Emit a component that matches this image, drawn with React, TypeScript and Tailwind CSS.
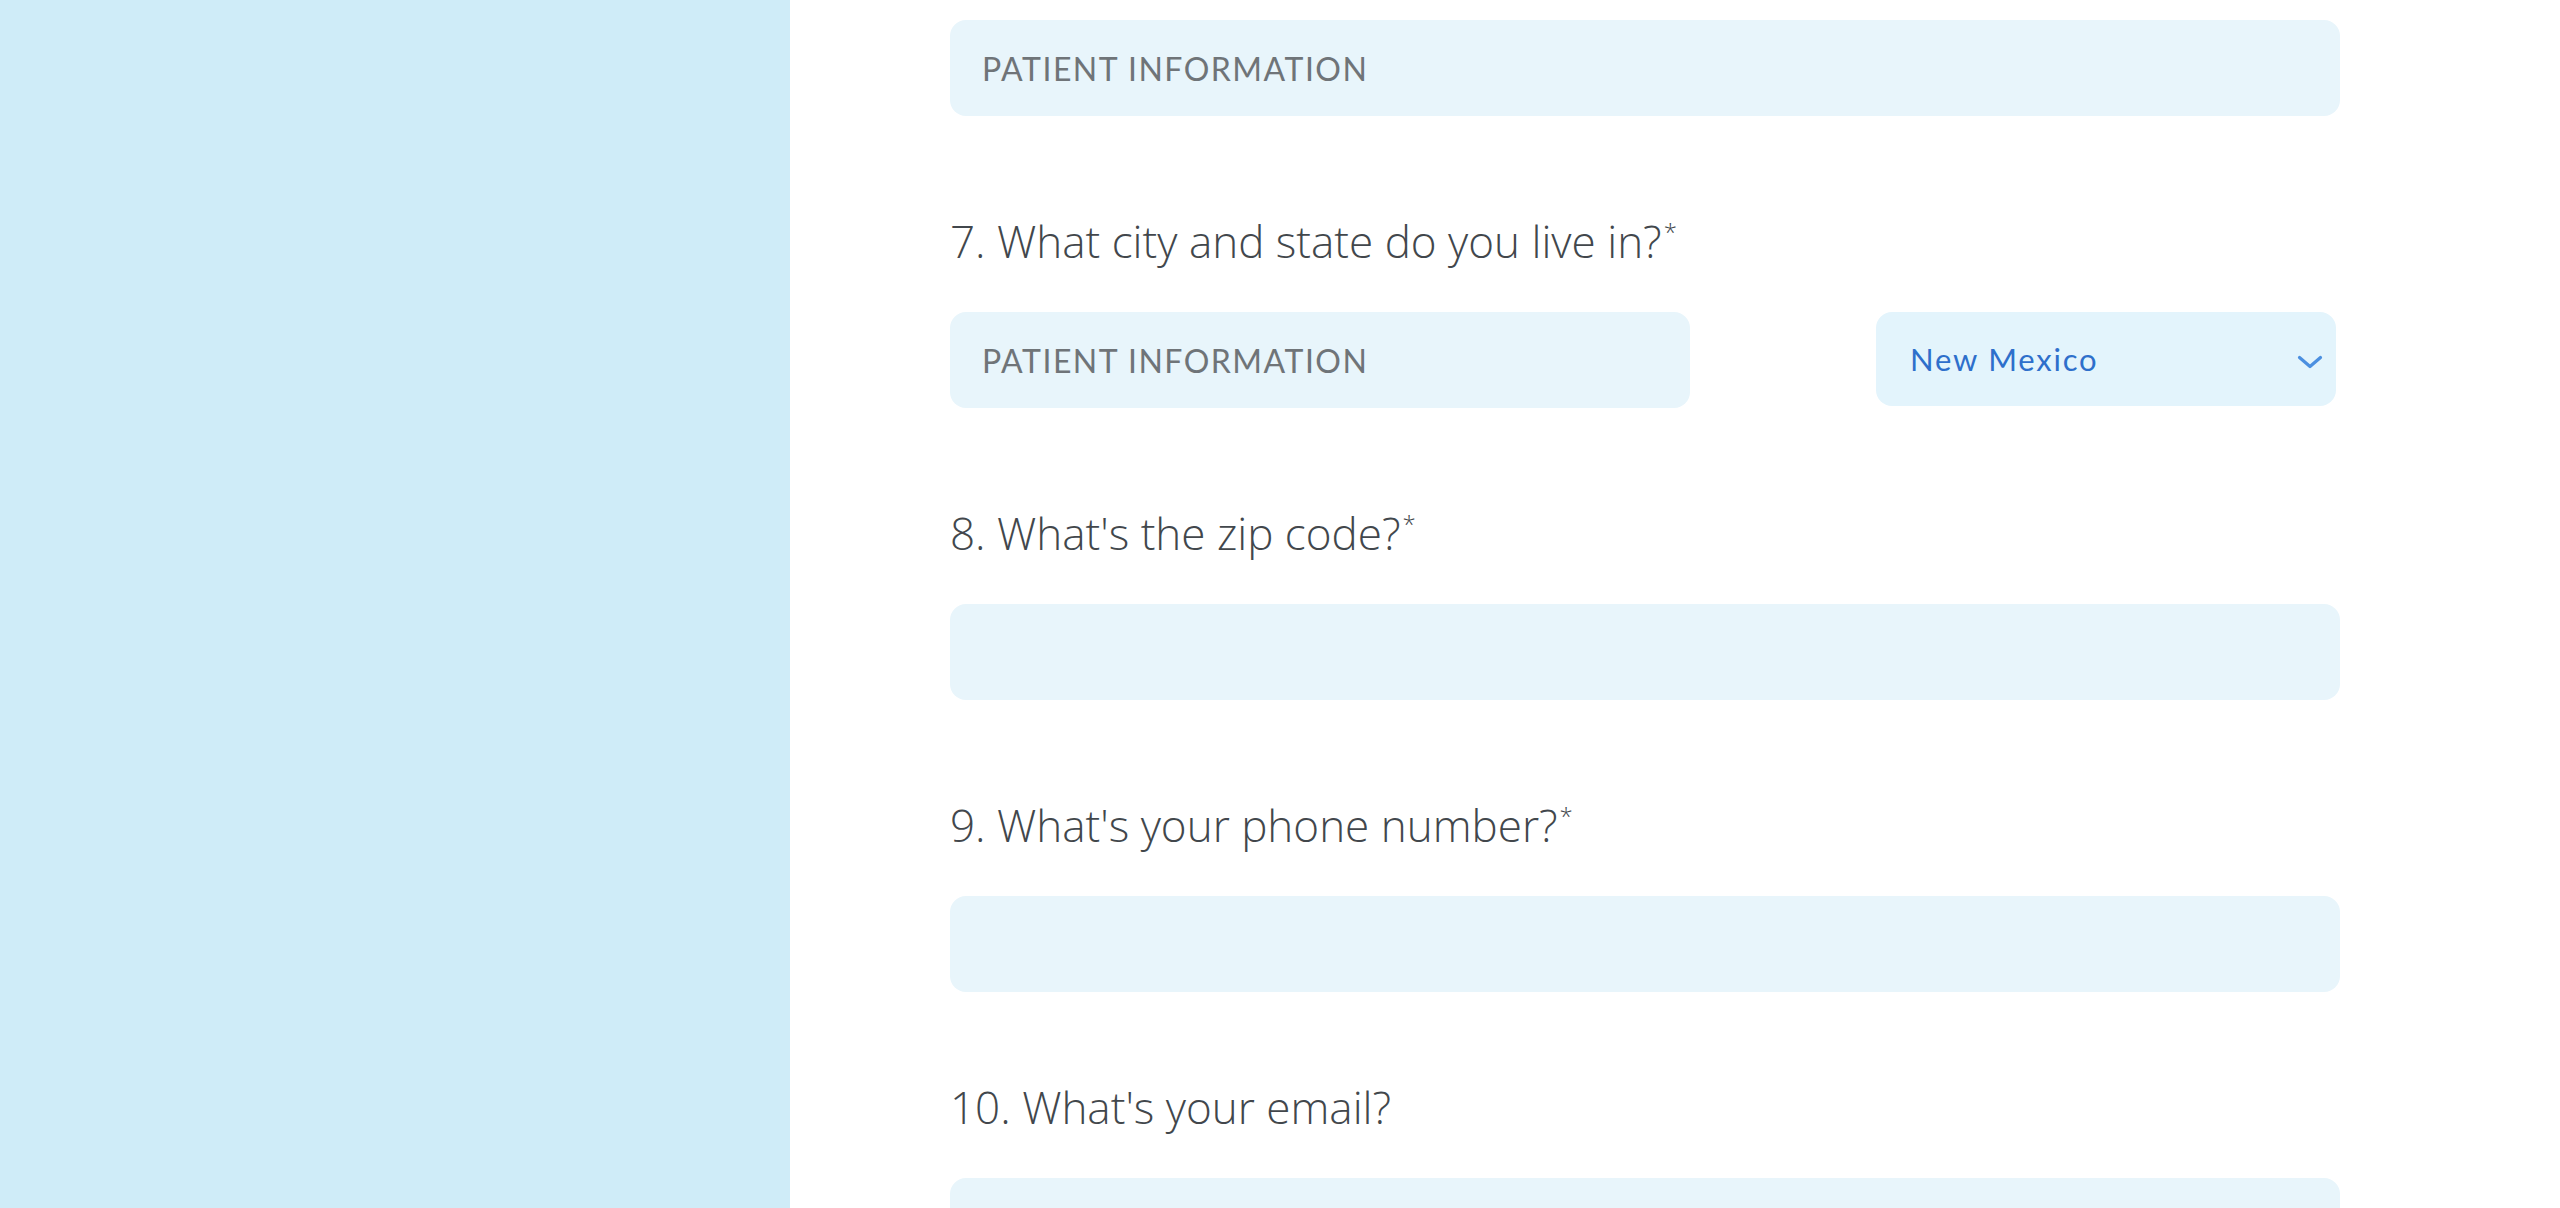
import React from 'react';

const fieldClass =
  'block h-[96px] w-full rounded-[16px] bg-[#e8f5fb] px-[32px] text-[32px] tracking-[1.5px] text-[#3f4448] outline-none placeholder:text-[#6f7478] [font-family:Lato,"Liberation_Sans",sans-serif]';

const labelClass =
  'text-[44px] leading-[60px] font-light text-[#42474c] [font-family:"Open_Sans","Liberation_Sans",sans-serif]';

const Question: React.FC<{ text: string; required?: boolean; className?: string }> = ({
  text,
  required,
  className,
}) => (
  <p className={`${labelClass} ${className ?? ''}`}>
    {text}
    {required && <sup className="relative top-[-17px] ml-[2px] text-[24px]">*</sup>}
  </p>
);

export default function App() {
  return (
    <div className="flex h-[1208px] w-full overflow-hidden bg-white">
      <aside className="w-[790px] shrink-0 bg-[#cfecf8]" />
      <main className="flex-1 pl-[160px] pt-[20px]">
        <div className="w-[1390px]">
          <input className={fieldClass} placeholder="PATIENT INFORMATION" />

          <Question className="mt-[95px]" text="7. What city and state do you live in?" required />
          <div className="mt-[41px] flex items-start justify-between">
            <input className={`${fieldClass} !w-[740px]`} placeholder="PATIENT INFORMATION" />
            <div className="relative mr-[4px] w-[460px]">
              <select
                defaultValue="NM"
                className="block h-[94px] w-full appearance-none rounded-[16px] bg-[#e3f4fc] pl-[34px] pr-[60px] text-[31px] tracking-[1.8px] text-[#2e6fcb] outline-none [font-family:Lato,'Liberation_Sans',sans-serif]"
              >
                <option value="NV">Nevada</option>
                <option value="NM">New Mexico</option>
                <option value="NY">New York</option>
              </select>
              <svg
                className="pointer-events-none absolute right-[13px] top-[43px] h-[14px] w-[26px]"
                viewBox="0 0 26 14"
                fill="none"
              >
                <path
                  d="M2.5 2.5 L13 11.5 L23.5 2.5"
                  stroke="#4b8fe0"
                  strokeWidth="3.2"
                  strokeLinecap="round"
                  strokeLinejoin="round"
                />
              </svg>
            </div>
          </div>

          <Question className="mt-[95px]" text="8. What's the zip code?" required />
          <input className={`${fieldClass} mt-[41px]`} />

          <Question className="mt-[95px]" text="9. What's your phone number?" required />
          <input className={`${fieldClass} mt-[41px]`} />

          <Question className="mt-[85px]" text="10. What's your email?" />
          <input className={`${fieldClass} mt-[41px]`} />
        </div>
      </main>
    </div>
  );
}
